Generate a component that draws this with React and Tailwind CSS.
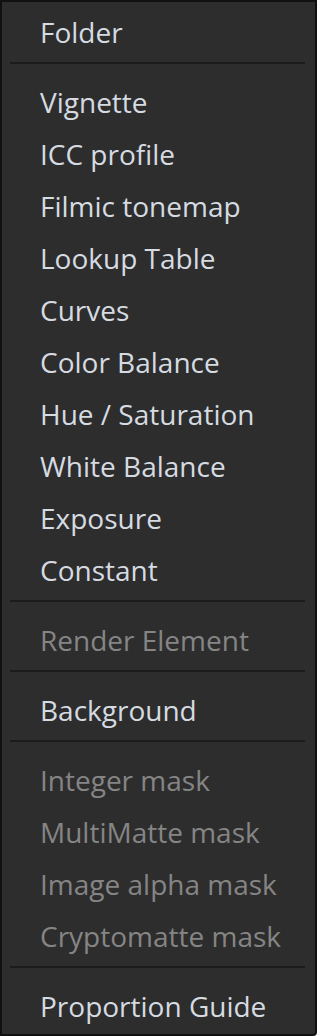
const groups = [
  [{ label: "Folder" }],
  [
    { label: "Vignette" },
    { label: "ICC profile" },
    { label: "Filmic tonemap" },
    { label: "Lookup Table" },
    { label: "Curves" },
    { label: "Color Balance" },
    { label: "Hue / Saturation" },
    { label: "White Balance" },
    { label: "Exposure" },
    { label: "Constant" },
  ],
  [{ label: "Render Element", disabled: true }],
  [{ label: "Background" }],
  [
    { label: "Integer mask", disabled: true },
    { label: "MultiMatte mask", disabled: true },
    { label: "Image alpha mask", disabled: true },
    { label: "Cryptomatte mask", disabled: true },
  ],
  [{ label: "Proportion Guide" }],
];

function MenuItem({ label, disabled }) {
  return (
    <div
      className={
        "h-[52px] flex items-center pl-[38px] pt-[8px] text-[28px] leading-none " +
        (disabled ? "text-[#858585]" : "text-[#d5dbe1]")
      }
    >
      {label}
    </div>
  );
}

function Separator() {
  return (
    <div className="h-[18px] flex items-center pl-[8px] pr-[10px]">
      <div className="h-[2px] w-full bg-[#1c1c1c]" />
    </div>
  );
}

export default function App() {
  return (
    <div
      className="w-[317px] h-[1036px] bg-[#2d2d2d] border-2 border-[#111111] rounded-br-[4px] select-none"
      style={{ fontFamily: '"Open Sans", "Noto Sans", sans-serif' }}
    >
      {groups.map((group, i) => (
        <div key={i}>
          {i > 0 && <Separator />}
          {group.map((item) => (
            <MenuItem key={item.label} {...item} />
          ))}
        </div>
      ))}
    </div>
  );
}
